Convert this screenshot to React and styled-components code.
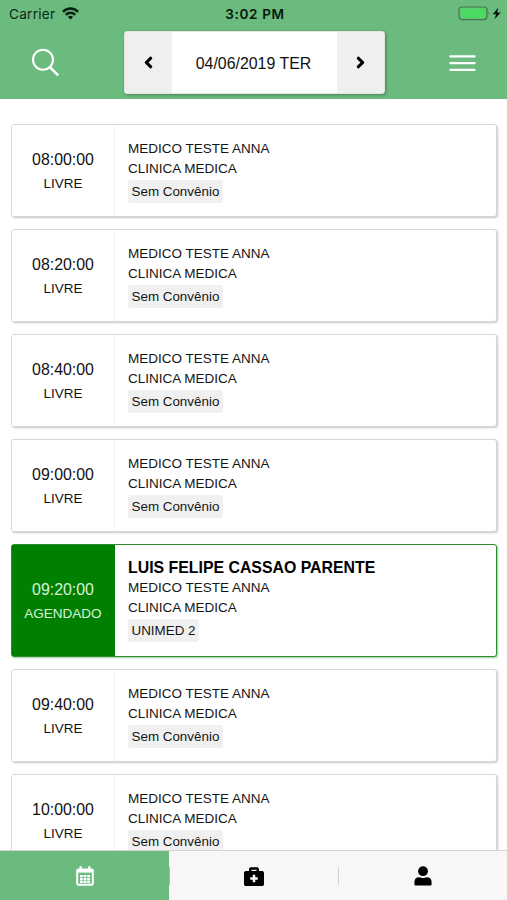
import React from 'react'
import styled, { createGlobalStyle } from 'styled-components'
import { FaAngleLeft, FaAngleRight, FaBriefcaseMedical } from 'react-icons/fa'

const GlobalStyle = createGlobalStyle`
    * {
        box-sizing: border-box;
    }
    body {
        margin: 0;
        background: #fff;
        font-family: "Liberation Sans", Arial, sans-serif;
        color: #000;
        overflow: hidden;
    }
    svg {
        display: block;
    }
`

const Screen = styled.div`
    height: 900px;
    display: flex;
    flex-direction: column;
    overflow: hidden;
`

const Header = styled.header`
    flex: none;
    height: 99px;
    background: #6bba7e;
`

const StatusBar = styled.div`
    height: 27px;
    padding: 0 6px 0 9px;
    display: grid;
    grid-template-columns: 1fr auto 1fr;
    align-items: center;
    font-family: Inter, sans-serif;
    font-size: 13.6px;
    color: #0c2a15;
`

const Carrier = styled.div`
    display: flex;
    align-items: center;
    gap: 7px;
    letter-spacing: 0.25px;
`

const Clock = styled.div`
    font-weight: 600;
    letter-spacing: 0.6px;
    color: #06190c;
`

const Battery = styled.div`
    display: flex;
    align-items: center;
    justify-content: flex-end;
    gap: 1px;
`

const Toolbar = styled.div`
    display: flex;
    align-items: flex-start;
    justify-content: space-between;
    padding: 4px 30px 0 31px;
`

const IconButton = styled.div`
    width: 29px;
    height: 63px;
    display: flex;
    align-items: center;
    justify-content: center;
`

const DatePicker = styled.div`
    display: flex;
    width: 261px;
    height: 63px;
    margin-left: 1px;
    border: 1px solid #e0e6e1;
    border-radius: 3px;
    background: #fff;
    overflow: hidden;
    box-shadow: 1px 1px 3px rgba(0, 0, 0, .3);
`

const DateArrow = styled.div`
    width: 47px;
    display: flex;
    align-items: center;
    justify-content: center;
    background: #efefef;
`

const DateLabel = styled.div`
    flex: 1;
    display: flex;
    align-items: center;
    justify-content: center;
    padding: 2px 2px 0 0;
    font-size: 15.9px;
    color: #111;
`

const List = styled.main`
    flex: 1;
    min-height: 0;
    overflow: hidden;
    padding: 25px 10px 0 11px;
    display: flex;
    flex-direction: column;
    gap: 12px;
`

const Card = styled.div`
    flex: none;
    display: flex;
    height: ${props => props.$booked ? 113 : 93}px;
    border: 1px solid ${props => props.$booked ? '#2b8c2f' : '#d6d8d8'};
    border-radius: 3px;
    background: #fff;
    box-shadow: 1px 1px 2px ${props => props.$booked ? 'rgba(0, 128, 0, .4)' : 'rgba(0, 0, 0, .22)'};
`

const TimeColumn = styled.div`
    width: 103px;
    display: flex;
    flex-direction: column;
    align-items: center;
    justify-content: center;
    padding-top: 2px;
    border-right: 1px solid ${props => props.$booked ? '#008000' : '#f1f1f1'};
    background: ${props => props.$booked ? '#008000' : '#fff'};
    color: ${props => props.$booked ? '#d9f2d9' : '#111'};
`

const Time = styled.span`
    font-size: 15.9px;
    line-height: 24px;
`

const Status = styled.span`
    font-size: 13.5px;
    line-height: 24px;
`

const Info = styled.div`
    display: flex;
    flex-direction: column;
    align-items: flex-start;
    padding: ${props => props.$booked ? 13 : 14}px 0 0 13px;
`

const Patient = styled.strong`
    font-size: 15.87px;
    line-height: 20px;
`

const Line = styled.span`
    font-size: 13.5px;
    line-height: 19.5px;
    color: #151515;
`

const Plan = styled.span`
    margin-top: 2px;
    padding: 0 3.5px;
    border-radius: 3px;
    background: #f0f0f0;
    font-size: 13.4px;
    line-height: 23px;
    color: #151515;
`

const TabBar = styled.nav`
    flex: none;
    display: flex;
    height: 50px;
    border-top: 1px solid #d3d3d3;
    background: #f7f7f7;
`

const Tab = styled.div`
    flex: 1;
    display: flex;
    align-items: center;
    justify-content: center;
    background: ${props => props.$active ? '#6bba7e' : 'transparent'};
    color: ${props => props.$active ? '#fff' : '#000'};
`

const Divider = styled.div`
    align-self: center;
    width: 1px;
    height: 18px;
    margin-right: -1px;
    background: ${props => props.$active ? '#8fc99d' : '#cfcfcf'};
`

const appointments = [
    { time: '08:00:00' },
    { time: '08:20:00' },
    { time: '08:40:00' },
    { time: '09:00:00' },
    { time: '09:20:00', patient: 'LUIS FELIPE CASSAO PARENTE', plan: 'UNIMED 2' },
    { time: '09:40:00' },
    { time: '10:00:00' },
]

function WifiIcon() {
    return (
        <svg width="17" height="13" viewBox="0 0 17 13" fill="none" stroke="#062010" strokeWidth="2.4">
            <path d="M1 4.9C5.2 .4 11.8 .4 16 4.9" />
            <path d="M3.8 7.9C6.5 5.1 10.5 5.1 13.2 7.9" />
            <path d="M8.5 12.6L5.9 9.9C7.3 8.4 9.7 8.4 11.1 9.9Z" fill="#062010" stroke="none" />
        </svg>
    )
}

function BatteryIcon() {
    return (
        <svg width="33" height="15" viewBox="0 0 33 15">
            <rect x="1" y="1" width="28" height="12.6" rx="3" fill="none" stroke="#43794f" strokeWidth="1.2" />
            <rect x="2.6" y="2.6" width="24.8" height="9.4" rx="1.6" fill="#4bdb62" />
            <path d="M30.4 5.2Q32.2 7.3 30.4 9.4Z" fill="#43794f" />
        </svg>
    )
}

function BoltIcon() {
    return (
        <svg width="9" height="13" viewBox="0 0 9 13" fill="#031008">
            <path d="M6.4 .6L.8 7.2H4.1L2.6 12.2L8.6 5.4H5.1Z" />
        </svg>
    )
}

function SearchIcon() {
    return (
        <svg width="29" height="29" viewBox="0 0 29 29" fill="none" stroke="#fff" strokeWidth="2.1">
            <circle cx="12" cy="11.7" r="10" />
            <path d="M18.8 19L27.2 27.4" strokeWidth="2.5" />
        </svg>
    )
}

function MenuIcon() {
    return (
        <svg width="27" height="18" viewBox="0 0 27 18" stroke="#fff" strokeWidth="2.3" strokeLinecap="round">
            <path d="M1.4 2.4H25.6M1.4 9.1H25.6M1.4 15.8H25.6" />
        </svg>
    )
}

function CalendarIcon() {
    return (
        <svg width="18" height="20" viewBox="0 0 18 20" fill="none" stroke="#fff">
            <rect x="1.2" y="3.4" width="15.6" height="15.4" rx="1.2" strokeWidth="2" />
            <path d="M1 4.8H17" strokeWidth="3.6" />
            <path d="M4.7 .3V4M13.3 .3V4" strokeWidth="2.3" />
            <path d="M4 10.2H14M4 13.1H14M4 15.8H14" strokeWidth="2.3" strokeDasharray="2.8 .8" />
        </svg>
    )
}

function PersonIcon() {
    return (
        <svg width="18" height="20" viewBox="0 0 18 20" fill="currentColor">
            <circle cx="9" cy="5.2" r="4.9" />
            <path d="M5.2 11.2C7.8 12.3 10.2 12.3 12.8 11.2C15.8 11.2 17.6 13.2 17.6 16V18C17.6 19 17 19.6 16 19.6H2C1 19.6 .4 19 .4 18V16C.4 13.2 2.2 11.2 5.2 11.2Z" />
        </svg>
    )
}

function Appointment({ time, patient, plan }) {
    const booked = Boolean(patient)
    return (
        <Card $booked={booked}>
            <TimeColumn $booked={booked}>
                <Time>{time}</Time>
                <Status>{booked ? 'AGENDADO' : 'LIVRE'}</Status>
            </TimeColumn>
            <Info $booked={booked}>
                {booked && <Patient>{patient}</Patient>}
                <Line>MEDICO TESTE ANNA</Line>
                <Line>CLINICA MEDICA</Line>
                <Plan>{plan || 'Sem Convênio'}</Plan>
            </Info>
        </Card>
    )
}

function App() {
    return (
        <Screen>
            <GlobalStyle />
            <Header>
                <StatusBar>
                    <Carrier>
                        <span>Carrier</span>
                        <WifiIcon />
                    </Carrier>
                    <Clock>3:02 PM</Clock>
                    <Battery>
                        <BatteryIcon />
                        <BoltIcon />
                    </Battery>
                </StatusBar>
                <Toolbar>
                    <IconButton><SearchIcon /></IconButton>
                    <DatePicker>
                        <DateArrow><FaAngleLeft size={19} /></DateArrow>
                        <DateLabel>04/06/2019 TER</DateLabel>
                        <DateArrow><FaAngleRight size={19} /></DateArrow>
                    </DatePicker>
                    <IconButton><MenuIcon /></IconButton>
                </Toolbar>
            </Header>
            <List>
                {appointments.map(item => <Appointment key={item.time} {...item} />)}
            </List>
            <TabBar>
                <Tab $active><CalendarIcon /></Tab>
                <Divider $active />
                <Tab><FaBriefcaseMedical size={20} /></Tab>
                <Divider />
                <Tab><PersonIcon /></Tab>
            </TabBar>
        </Screen>
    )
}

export default App
